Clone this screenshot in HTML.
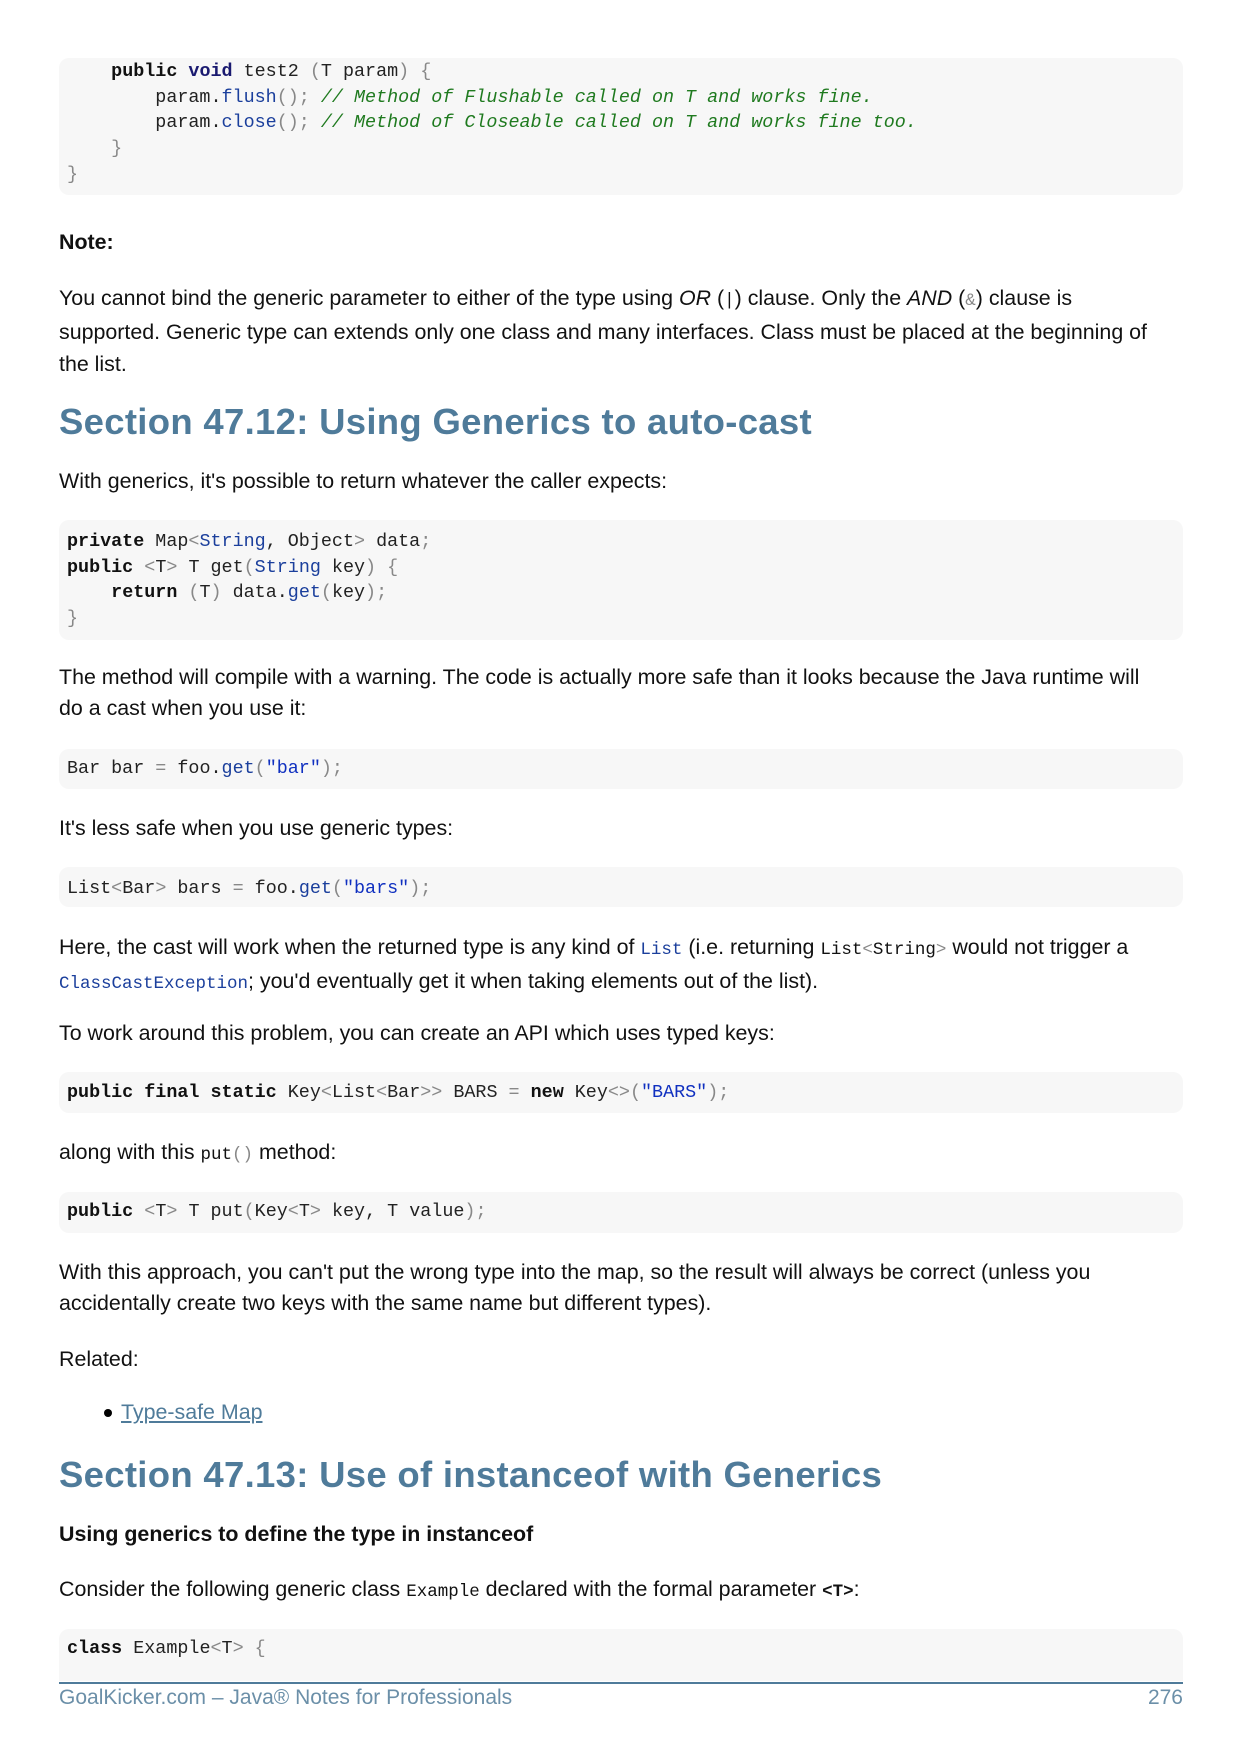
<!DOCTYPE html>
<html><head><meta charset="utf-8"><style>
*{margin:0;padding:0;box-sizing:border-box}
body{width:1240px;height:1754px;background:#fff;position:relative;overflow:hidden;font-family:"Liberation Sans",sans-serif;color:#111}
.t{position:absolute;left:59px;width:1140px;font-size:21.4px;line-height:31.3px;white-space:nowrap}
.box{position:absolute;left:59px;width:1124px;background:#f7f7f7;border-radius:10px}
.code{position:absolute;left:67px;font-family:"Liberation Mono",monospace;font-size:18.4px;line-height:25.7px;white-space:pre;color:#222}
.k{font-weight:bold;color:#111}.kv{font-weight:bold;color:#1a1a70}.m{color:#1b3f9c}.s{color:#1030c0}.p{color:#888}.c{color:#1f7a1f;font-style:italic}
.h{position:absolute;left:59px;font-size:36.5px;color:#4f7b9a;font-weight:bold;white-space:nowrap;letter-spacing:0.3px}
.ic{font-family:"Liberation Mono",monospace;font-size:17.5px}
.ib{font-family:"Liberation Mono",monospace;font-size:17.5px;color:#1b3f9c}
</style></head><body>
<div class="box" style="top:58px;height:137px"></div>
<div class="code" style="top:59px">    <span class="k">public</span> <span class="kv">void</span> test2 <span class="p">(</span>T param<span class="p">) {</span>
        param.<span class="m">flush</span><span class="p">();</span> <span class="c">// Method of Flushable called on T and works fine.</span>
        param.<span class="m">close</span><span class="p">();</span> <span class="c">// Method of Closeable called on T and works fine too.</span>
    <span class="p">}</span>
<span class="p">}</span></div>

<div class="t" style="top:227px;font-weight:bold">Note:</div>
<div class="t" style="top:283px">You cannot bind the generic parameter to either of the type using <i>OR</i> (<span class="ic">|</span>) clause. Only the <i>AND</i> (<span class="ic" style="color:#888">&amp;</span>) clause is<br>supported. Generic type can extends only one class and many interfaces. Class must be placed at the beginning of<br>the list.</div>

<div class="h" style="top:401px">Section 47.12: Using Generics to auto-cast</div>
<div class="t" style="top:466px">With generics, it's possible to return whatever the caller expects:</div>
<div class="box" style="top:520px;height:120px"></div>
<div class="code" style="top:529px"><span class="k">private</span> Map<span class="p">&lt;</span><span class="m">String</span>, Object<span class="p">&gt;</span> data<span class="p">;</span>
<span class="k">public</span> <span class="p">&lt;</span>T<span class="p">&gt;</span> T get<span class="p">(</span><span class="m">String</span> key<span class="p">) {</span>
    <span class="k">return</span> <span class="p">(</span>T<span class="p">)</span> data.<span class="m">get</span><span class="p">(</span>key<span class="p">);</span>
<span class="p">}</span></div>

<div class="t" style="top:662px">The method will compile with a warning. The code is actually more safe than it looks because the Java runtime will<br>do a cast when you use it:</div>
<div class="box" style="top:749px;height:40px"></div>
<div class="code" style="top:756px">Bar bar <span class="p">=</span> foo.<span class="m">get</span><span class="p">(</span><span class="s">"bar"</span><span class="p">);</span></div>

<div class="t" style="top:813px">It's less safe when you use generic types:</div>
<div class="box" style="top:867px;height:40px"></div>
<div class="code" style="top:876px">List<span class="p">&lt;</span>Bar<span class="p">&gt;</span> bars <span class="p">=</span> foo.<span class="m">get</span><span class="p">(</span><span class="s">"bars"</span><span class="p">);</span></div>

<div class="t" style="top:932px">Here, the cast will work when the returned type is any kind of <span class="ib">List</span> (i.e. returning <span class="ic">List<span class="p">&lt;</span>String<span class="p">&gt;</span></span> would not trigger a<br><span class="ib">ClassCastException</span>; you'd eventually get it when taking elements out of the list).</div>
<div class="t" style="top:1018px">To work around this problem, you can create an API which uses typed keys:</div>
<div class="box" style="top:1072px;height:41px"></div>
<div class="code" style="top:1080px"><span class="k">public</span> <span class="k">final</span> <span class="k">static</span> Key<span class="p">&lt;</span>List<span class="p">&lt;</span>Bar<span class="p">&gt;&gt;</span> BARS <span class="p">=</span> <span class="k">new</span> Key<span class="p">&lt;&gt;(</span><span class="s">"BARS"</span><span class="p">);</span></div>

<div class="t" style="top:1137px">along with this <span class="ic">put<span class="p">()</span></span> method:</div>
<div class="box" style="top:1192px;height:41px"></div>
<div class="code" style="top:1199px"><span class="k">public</span> <span class="p">&lt;</span>T<span class="p">&gt;</span> T put<span class="p">(</span>Key<span class="p">&lt;</span>T<span class="p">&gt;</span> key, T value<span class="p">);</span></div>

<div class="t" style="top:1257px">With this approach, you can't put the wrong type into the map, so the result will always be correct (unless you<br>accidentally create two keys with the same name but different types).</div>
<div class="t" style="top:1344px">Related:</div>
<div style="position:absolute;left:104px;top:1409px;width:8px;height:8px;border-radius:50%;background:#000"></div>
<div class="t" style="top:1397px;left:121px;color:#4f7b9a;text-decoration:underline">Type-safe Map</div>

<div class="h" style="top:1454px">Section 47.13: Use of instanceof with Generics</div>
<div class="t" style="top:1519px;font-weight:bold">Using generics to define the type in instanceof</div>
<div class="t" style="top:1574px">Consider the following generic class <span class="ic">Example</span> declared with the formal parameter <b class="ic">&lt;T&gt;</b>:</div>
<div class="box" style="top:1629px;height:52px;border-radius:10px 10px 0 0"></div>
<div class="code" style="top:1636px"><span class="k">class</span> Example<span class="p">&lt;</span>T<span class="p">&gt; {</span></div>

<div style="position:absolute;left:59px;top:1682px;width:1124px;height:2px;background:#4f7b9a"></div>
<div style="position:absolute;left:59px;top:1686px;font-size:21px;color:#6b8fa8">GoalKicker.com – Java® Notes for Professionals</div>
<div style="position:absolute;left:1000px;width:183px;text-align:right;top:1686px;font-size:21px;color:#6b8fa8">276</div>
</body></html>
